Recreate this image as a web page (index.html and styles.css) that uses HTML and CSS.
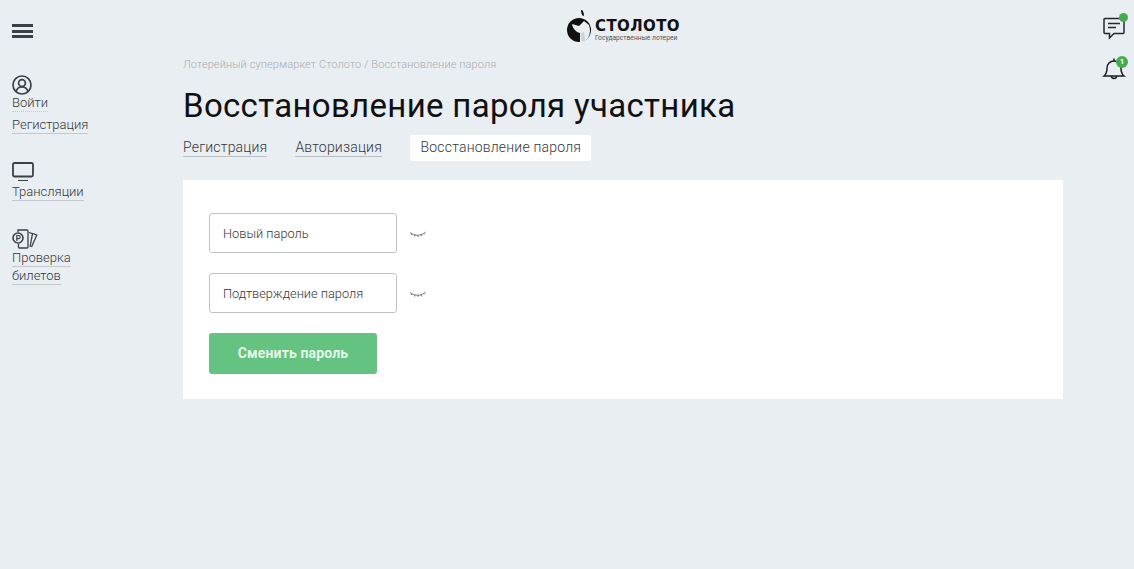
FILE: index.html
```html
<!DOCTYPE html>
<html lang="ru">
<head>
<meta charset="utf-8">
<title>Восстановление пароля участника</title>
<link rel="stylesheet" href="styles.css">
</head>
<body>
<div class="page">
  <aside class="side">
    <div class="burger"><span></span><span></span><span></span></div>
    <nav class="side-nav">
      <div class="side-group login">
        <svg class="ico" width="20" height="20" viewBox="0 0 20 20" fill="none" stroke="#3a4046" stroke-width="1.700"><circle cx="10" cy="10" r="9"/><circle cx="10" cy="8" r="3.400"/><path d="M4 16.500c.8-3 3-4.500 6-4.500s5.200 1.500 6 4.500"/></svg>
        <a class="side-link">Войти</a>
        <a class="side-link reg">Регистрация</a>
      </div>
      <div class="side-group tv">
        <svg class="ico" width="22" height="19" viewBox="0 0 22 19" fill="none" stroke="#3a4046"><rect x="1" y="1" width="20" height="13.500" rx="1.500" stroke-width="1.800"/><path d="M6 18.500h10" stroke-width="1.100"/></svg>
        <a class="side-link">Трансляции</a>
      </div>
      <div class="side-group tickets">
        <svg class="ico" width="26" height="20" viewBox="0 0 26 20" fill="none" stroke="#3a4046" stroke-width="1.300"><path d="M6 3V1h9a1 1 0 0 1 1 1v16a1 1 0 0 1-1 1H7.500a1 1 0 0 1-1-1v-3"/><path d="M17 3.500l3.500 1.200L18 18"/><path d="M21 4.500l3.800 1.700L19.500 18"/><circle cx="6" cy="9" r="5" stroke-width="1.600"/><path d="M4.800 12V6.500h1.800a1.500 1.500 0 0 1 0 3.200H4.800" stroke-width="1.200"/></svg>
        <a class="side-link">Проверка</a>
        <a class="side-link second">билетов</a>
      </div>
    </nav>
  </aside>

  <main class="main">
    <div class="crumbs">Лотерейный супермаркет Столото / Восстановление пароля</div>
    <h1 class="title">Восстановление пароля участника</h1>
    <div class="tabs">
      <a class="tab">Регистрация</a>
      <a class="tab">Авторизация</a>
      <span class="tab-active">Восстановление пароля</span>
    </div>
    <section class="card">
      <div class="field">
        <div class="input">Новый пароль</div>
        <svg class="eye" width="18" height="8" viewBox="0 0 18 8" fill="none" stroke="#555" stroke-width=".8"><path d="M1 2.500c2 1.800 4.500 2.700 7.500 2.700s6-1 8-3.200"/><path d="M3 3.500L2 5M6 4.800L5.500 6.500M9 5.200V7M12 4.800l.8 1.500M15 3.300l1.200 1.200"/></svg>
      </div>
      <div class="field">
        <div class="input">Подтверждение пароля</div>
        <svg class="eye" width="18" height="8" viewBox="0 0 18 8" fill="none" stroke="#555" stroke-width=".8"><path d="M1 2.500c2 1.800 4.500 2.700 7.500 2.700s6-1 8-3.200"/><path d="M3 3.500L2 5M6 4.800L5.500 6.500M9 5.200V7M12 4.800l.8 1.500M15 3.300l1.200 1.200"/></svg>
      </div>
      <button class="submit" type="button">Сменить пароль</button>
    </section>
  </main>

  <aside class="rail">
    <div class="rail-item chat">
      <svg width="24" height="24" viewBox="0 0 24 24" fill="none" stroke="#26292c" stroke-width="1.500"><path d="M3 2.500h18a1 1 0 0 1 1 1v13a1 1 0 0 1-1 1H12L7.500 22v-4.500H3a1 1 0 0 1-1-1v-13a1 1 0 0 1 1-1z"/><path d="M6 7.500h12M6 11.500h8"/></svg>
      <span class="dot"></span>
    </div>
    <div class="rail-item bell">
      <svg width="24" height="24" viewBox="0 0 24 24" fill="none" stroke="#1c1e20" stroke-width="1.500"><path d="M2 19h20c-2.500-2-3-4.500-3-8 0-4-3-7-7-7s-7 3-7 7c0 3.500-.5 6-3 8z"/><path d="M12 1.500V4M9.500 19a2.500 2.500 0 0 0 5 0"/></svg>
      <span class="badge">1</span>
    </div>
  </aside>

  <a class="logo">
    <svg class="logo-mark" width="25" height="33" viewBox="0 0 25 33"><circle cx="12" cy="20" r="12" fill="#111"/><path d="M5 14l7 2 5-5 5 4c1.500 4 1.500 9-1 13l-4 4h-4v-9c-4-1-7-4-8-9z" fill="#e9eef2"/><path d="M17 22l1.500 9-4 .5-1-8z" fill="#111" opacity=".12"/><circle cx="12.500" cy="11.500" r="2.200" fill="#111"/><ellipse cx="15.500" cy="3" rx="1.100" ry="3.200" transform="rotate(-15 15.500 3)" fill="#111"/></svg>
    <span class="logo-text">
      <span class="logo-name">СТОЛОТО</span>
      <span class="logo-sub">Государственные лотереи</span>
    </span>
  </a>
</div>
</body>
</html>
```
FILE: styles.css
```css
* { box-sizing: border-box; }
html, body { margin: 0; height: 100%; }
body {
  background: #e9eef2;
  font-family: Roboto, "Liberation Sans", sans-serif;
  color: #3f4347;
  overflow: hidden;
}
.page {
  position: relative;
  display: grid;
  grid-template-columns: 183px 880px 1fr;
  height: 569px;
}
.side { padding: 24px 0 0 12px; }
.burger { display: flex; flex-direction: column; gap: 2.500px; width: 21px; }
.burger span { display: block; height: 3px; background: #3a4046; }
.side-nav { display: flex; flex-direction: column; margin-top: 37px; }
.side-group { display: flex; flex-direction: column; align-items: flex-start; }
.side-group.tv { margin-top: 28px; }
.side-group.tickets { margin-top: 28px; }
.ico { display: block; }
.side-link {
  font-size: 13px;
  font-weight: 300;
  line-height: 16px;
  color: #33373b;
  border-bottom: 1px solid #c3c8cc;
}
.login .side-link { margin-top: 0; border-bottom-style: dotted; }
.login .reg { margin-top: 5px; border-bottom-style: solid; }
.tv .ico { margin-bottom: 3px; }
.tickets .ico { margin-bottom: 1px; }
.tickets .second { margin-top: 1px; }

.main { padding-top: 58px; }
.crumbs { font-size: 11px; font-weight: 300; line-height: 14px; color: #a9adb1; letter-spacing: .1px; }
.title {
  margin: 12px 0 0;
  font-size: 33px;
  font-weight: 400;
  line-height: 44px;
  color: #111;
  letter-spacing: .32px;
}
.tabs { display: flex; align-items: center; margin-top: 7px; height: 26px; }
.tab {
  font-size: 14px;
  font-weight: 300;
  line-height: 17px;
  color: #33373b;
  border-bottom: 1px solid #b9bec2;
  margin-right: 28px;
  letter-spacing: .2px;
}
.tab-active {
  background: #fff;
  border-radius: 2px;
  font-size: 14px;
  font-weight: 300;
  line-height: 24px;
  padding: 0 9.500px 2px 10.500px;
  color: #33373b;
  letter-spacing: .2px;
}
.card {
  background: #fff;
  margin-top: 19px;
  height: 219px;
  padding: 33px 26px 0;
}
.field { display: flex; align-items: center; margin-bottom: 20px; }
.input {
  width: 188px;
  height: 40px;
  border: 1px solid #bfc3c6;
  border-radius: 3px;
  padding: 0 13px;
  font-size: 12.800px;
  font-weight: 300;
  line-height: 39px;
  color: #33373b;
}
.eye { margin-left: 12px; margin-top: 2px; }
.submit {
  display: block;
  width: 168px;
  height: 41px;
  border: 0;
  border-radius: 3px;
  background: #65c382;
  color: #e6f6ea;
  font-family: inherit;
  font-size: 14px;
  font-weight: 700;
  letter-spacing: .15px;
  line-height: 38px;
  padding: 0 0 2px;
}

.rail { display: flex; flex-direction: column; align-items: flex-end; padding: 16px 8px 0 0; }
.rail-item { position: relative; width: 24px; height: 24px; }
.rail-item svg { display: block; }
.bell { margin-top: 17px; }
.dot {
  position: absolute;
  top: -3px;
  right: -2px;
  width: 9px;
  height: 9px;
  border-radius: 50%;
  background: #46ad4e;
}
.badge {
  position: absolute;
  top: -1px;
  right: -2px;
  width: 12px;
  height: 12px;
  border-radius: 50%;
  background: #46ad4e;
  color: #fff;
  font-size: 8px;
  font-weight: 700;
  line-height: 12px;
  text-align: center;
}

.logo {
  position: absolute;
  top: 10px;
  left: 567px;
  display: flex;
  align-items: flex-start;
  gap: 3px;
}
.logo-mark { display: block; }
.logo-text { display: flex; flex-direction: column; padding-top: 8px; }
.logo-name {
  font-family: "DejaVu Sans", sans-serif;
  font-size: 15px;
  font-weight: 700;
  line-height: 16px;
  color: #111;
  letter-spacing: .4px;
}
.logo-sub { font-size: 6.700px; line-height: 9px; color: #555; white-space: nowrap; }
```
